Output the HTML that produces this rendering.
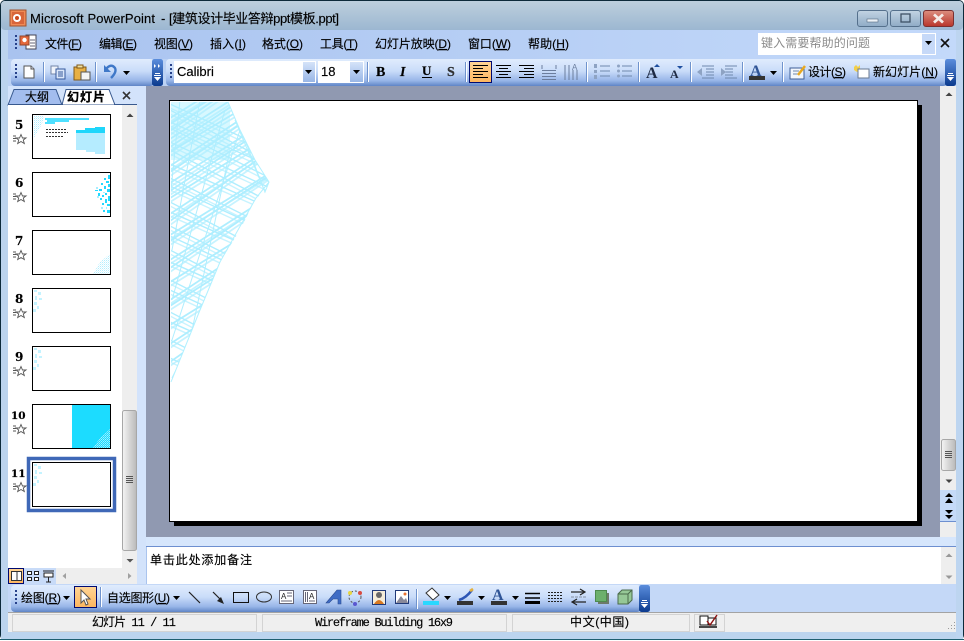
<!DOCTYPE html>
<html><head><meta charset="utf-8"><style>
html,body{margin:0;padding:0;background:#fff;width:964px;height:641px;overflow:hidden}
svg{display:block}
text{font-family:"Liberation Sans","WenQuanYi Zen Hei","Noto Sans CJK SC",sans-serif;font-size:12px;fill:#000;white-space:pre;stroke:#000;stroke-width:.15}
.m{font-family:"Liberation Mono","WenQuanYi Zen Hei",monospace;font-size:12px}
.n{font-family:"DejaVu Serif",serif;font-weight:bold;font-size:12px;fill:#000}
tspan.u{text-decoration:underline}
</style></head><body>
<svg width="964" height="641" viewBox="0 0 964 641" xmlns="http://www.w3.org/2000/svg">
<defs>
<linearGradient id="tit" x1="0" y1="0" x2="0" y2="1"><stop offset="0" stop-color="#bdcfdd"/><stop offset="1" stop-color="#9cb7d1"/></linearGradient>
<linearGradient id="menu" x1="0" y1="0" x2="1" y2="0"><stop offset="0" stop-color="#a9c3ef"/><stop offset="1" stop-color="#c3d9fa"/></linearGradient>
<linearGradient id="tb" x1="0" y1="0" x2="0" y2="1"><stop offset="0" stop-color="#e0ecfd"/><stop offset=".45" stop-color="#c9dcf9"/><stop offset=".8" stop-color="#98b6e8"/><stop offset="1" stop-color="#5f85c6"/></linearGradient>
<linearGradient id="chev" x1="0" y1="0" x2="0" y2="1"><stop offset="0" stop-color="#5a8ddc"/><stop offset="1" stop-color="#0b3a8e"/></linearGradient>
<linearGradient id="org" x1="0" y1="0" x2="0" y2="1"><stop offset="0" stop-color="#ffd596"/><stop offset="1" stop-color="#fdb65e"/></linearGradient>
<linearGradient id="btn" x1="0" y1="0" x2="0" y2="1"><stop offset="0" stop-color="#c3d4e3"/><stop offset="1" stop-color="#8fabc6"/></linearGradient>
<linearGradient id="cls" x1="0" y1="0" x2="0" y2="1"><stop offset="0" stop-color="#dc8f80"/><stop offset="1" stop-color="#b9352a"/></linearGradient>
<linearGradient id="th" x1="0" y1="0" x2="1" y2="0"><stop offset="0" stop-color="#f4f4f4"/><stop offset="1" stop-color="#b9b9b9"/></linearGradient>
<linearGradient id="dd" x1="0" y1="0" x2="0" y2="1"><stop offset="0" stop-color="#d5e3f9"/><stop offset="1" stop-color="#98b6e6"/></linearGradient>
<clipPath id="wf"><path d="M171 102H228L240 130L255 160L269 182L265 192L256 198L240 230L220 262L200 310L171 382Z"/></clipPath>
<pattern id="dotsl" width="2" height="2" patternUnits="userSpaceOnUse"><rect width="1" height="1" fill="#b2eeff"/><rect x="1" y="1" width="1" height="1" fill="#dff8ff"/></pattern>
<g id="sep"><rect width="1" height="20" fill="#6f93cd"/><rect x="1" width="1" height="20" fill="#fff"/></g>
<g id="grip"><rect x="0" y="0" width="2" height="2" fill="#27418a"/><rect x="0" y="4" width="2" height="2" fill="#27418a"/><rect x="0" y="8" width="2" height="2" fill="#27418a"/><rect x="0" y="12" width="2" height="2" fill="#27418a"/></g>
<path id="ar" d="M0 0H7L3.500 4Z" fill="#000"/>
<g id="star"><path d="M6 .5L7.500 4H11L8.300 6L9.300 9.500L6 7.500L2.700 9.500L3.700 6L1 4H4.500Z" transform="translate(1,0)" fill="#fff" stroke="#555" stroke-width=".9"/><path d="M-1 2H2M-1 4.500H2M-1 7H2" stroke="#555" fill="none"/></g>
<g id="cv"><rect x="2" y="0" width="5" height="1" fill="#fff"/><rect x="1" y="2" width="7" height="1" fill="#fff"/><path d="M1 4H8L4.500 8Z" fill="#fff"/></g>
<g id="wire11"><path d="M34 464h3v2h-3zM38 466h3v3h-3zM35 470h2v4h-2zM39 472h3v2h-3zM34 476h3v3h-3zM37 480h2v3h-2zM33 483h3v3h-3z" fill="#c4f3ff"/></g>
<g id="famA"><path stroke-width="1.800" d="M170 118l100-62M170 124l100-62M170 131l100-70M170 139l100-64M170 147l100-66M170 152l100-60M170 166l100-66M170 172l100-68M170 183l100-64M170 191l100-66M170 198l100-62M170 214l100-66M170 221l100-70M170 235l100-62M170 241l100-66M170 260l100-64M170 268l100-68M170 282l100-62M170 300l100-66M170 306l100-64M170 325l100-62M170 344l100-66M170 362l100-70"/></g>
<g id="famB"><path stroke-width="1.400" d="M170 104l100 46M170 110l100 52M170 122l100 44M170 128l100 50M170 142l100 46M170 150l100 52M170 164l100 44M170 178l100 50M170 186l100 46M170 202l100 52M170 212l100 44M170 226l100 50M170 236l100 46M170 250l100 52M170 262l100 44M170 280l100 50M170 290l100 46M170 312l100 52M170 322l100 44M170 340l100 50M170 358l100 46"/></g>
</defs>

<!-- window -->
<rect width="964" height="641" fill="#fff"/>
<rect x="0" y="0" width="964" height="640" rx="5" fill="#0d2a3a"/>
<rect x="1" y="1" width="962" height="638" rx="4" fill="#bcd2ea"/>
<rect x="1" y="1" width="962" height="29" rx="4" fill="url(#tit)"/>
<rect x="1" y="30" width="7" height="609" fill="#bcd4ee"/>
<rect x="956" y="30" width="7" height="609" fill="#bdd5f0"/>
<rect x="8" y="632" width="948" height="7" fill="#bcd4ee"/>
<rect x="0" y="639" width="964" height="1" fill="#1f5f70"/>

<!-- title -->
<rect x="10" y="10" width="16" height="16" fill="#f08a55" stroke="#a0522d"/>
<rect x="12" y="12" width="12" height="12" fill="#d8663a"/>
<circle cx="17" cy="18" r="4" fill="#fff"/><circle cx="17" cy="18" r="2" fill="#c84a20"/>
<text x="30" y="23" style="font-size:13px" textLength="125">Microsoft PowerPoint</text>
<text x="161" y="23" style="font-size:13px">-</text>
<text x="169" y="23" style="font-size:13px" textLength="170">[建筑设计毕业答辩ppt模板.ppt]</text>

<!-- window buttons -->
<rect x="857.500" y="10.500" width="30" height="16" rx="2.500" fill="url(#btn)" stroke="#55708c"/>
<rect x="867" y="19" width="11" height="3" fill="#eef3f8" stroke="#566a80" stroke-width=".6"/>
<rect x="890.500" y="10.500" width="30" height="16" rx="2.500" fill="url(#btn)" stroke="#55708c"/>
<rect x="901" y="14" width="9" height="8" fill="none" stroke="#3f5266" stroke-width="1.300"/>
<rect x="923.500" y="10.500" width="30" height="16" rx="2.500" fill="url(#cls)" stroke="#7a3030"/>
<path d="M934 14.500L943 22.500M943 14.500L934 22.500" stroke="#f5ece8" stroke-width="2.800"/>

<!-- menu bar -->
<rect x="8" y="30" width="948" height="29" fill="url(#menu)"/>
<use href="#grip" x="15" y="35"/>
<rect x="26" y="35" width="10" height="14" fill="#fff" stroke="#445"/>
<rect x="20" y="36" width="9" height="9" fill="#e4683c" stroke="#92452a"/>
<circle cx="24.500" cy="40" r="2.200" fill="#fff"/>
<path d="M30 40H35M30 43H35M30 46H35" stroke="#667"/>
<text x="45" y="48" textLength="37">文件(<tspan class="u">F</tspan>)</text>
<text x="99" y="48" textLength="38">编辑(<tspan class="u">E</tspan>)</text>
<text x="154" y="48" textLength="39">视图(<tspan class="u">V</tspan>)</text>
<text x="210" y="48" textLength="36">插入(<tspan class="u">I</tspan>)</text>
<text x="262" y="48" textLength="41">格式(<tspan class="u">O</tspan>)</text>
<text x="320" y="48" textLength="38">工具(<tspan class="u">T</tspan>)</text>
<text x="375" y="48" textLength="76">幻灯片放映(<tspan class="u">D</tspan>)</text>
<text x="468" y="48" textLength="43">窗口(<tspan class="u">W</tspan>)</text>
<text x="528" y="48" textLength="41">帮助(<tspan class="u">H</tspan>)</text>
<rect x="758" y="33" width="178" height="22" fill="#fff"/>
<text x="761" y="47" style="fill:#8c8c8c;stroke:none" textLength="109">键入需要帮助的问题</text>
<rect x="922" y="34" width="13" height="20" fill="#c6d9f8"/>
<use href="#ar" x="925" y="41"/>
<path d="M941 39L949 47M949 39L941 47" stroke="#111" stroke-width="1.600"/>

<!-- toolbar row -->
<rect x="8" y="59" width="948" height="27" fill="#bcd2f4"/>
<rect x="11" y="59" width="143" height="27" rx="4" fill="url(#tb)"/>
<rect x="152" y="59" width="11" height="27" rx="2.500" fill="url(#chev)"/>
<path d="M154 64L156 66L154 68ZM158 64L160 66L158 68Z" fill="#fff"/>
<use href="#cv" x="153" y="73"/>
<use href="#grip" x="15" y="64"/>
<path d="M24 66H31L34 69V78H24Z" fill="#fff" stroke="#555"/>
<path d="M31 66V69H34" fill="#dde" stroke="#555"/>
<use href="#sep" x="43" y="62"/>
<path d="M51 66H58V74H51Z" fill="#f0f4fb" stroke="#7486a8"/>
<path d="M56 69H65V79H56Z" fill="#dbe7fa" stroke="#35589c"/><path d="M58 72H63M58 74H63M58 76H63" stroke="#35589c"/>
<rect x="74" y="67" width="12" height="13" fill="#e8b044" stroke="#80591a"/>
<rect x="77" y="65" width="6" height="3" fill="#f0e0a0" stroke="#80591a"/>
<rect x="81" y="72" width="9" height="8" fill="#f4f4f4" stroke="#555"/>
<use href="#sep" x="95" y="62"/>
<path d="M106 69Q111 63 115 68Q117 72 111 78" fill="none" stroke="#3f78c8" stroke-width="2.400"/>
<path d="M104 65V72H111Z" fill="#3f78c8"/>
<use href="#ar" x="123" y="71"/>

<rect x="166" y="59" width="781" height="27" rx="4" fill="url(#tb)"/>
<rect x="945" y="59" width="11" height="27" rx="2.500" fill="url(#chev)"/>
<use href="#cv" x="946" y="73"/>
<use href="#grip" x="170" y="64"/>
<rect x="174" y="61" width="142" height="22" fill="#fff"/>
<text x="177" y="76" style="font-size:13px">Calibri</text>
<rect x="303" y="62" width="12" height="20" fill="url(#dd)"/>
<use href="#ar" x="305" y="70"/>
<rect x="318" y="61" width="46" height="22" fill="#fff"/>
<text x="321" y="76" style="font-size:13px">18</text>
<rect x="350" y="62" width="13" height="20" fill="url(#dd)"/>
<use href="#ar" x="353" y="70"/>
<use href="#sep" x="367" y="62"/>
<text x="376" y="76" style="font-family:'Liberation Serif',serif;font-weight:bold;font-size:14px">B</text>
<text x="400" y="76" style="font-family:'Liberation Serif',serif;font-weight:bold;font-style:italic;font-size:14px">I</text>
<text x="422" y="75" style="font-family:'Liberation Serif',serif;font-weight:bold;font-size:13px">U</text><rect x="422" y="77" width="10" height="1" fill="#000"/>
<text x="447" y="76" style="font-family:'Liberation Serif',serif;font-weight:bold;font-size:14px;fill:#333">S</text>
<use href="#sep" x="465" y="62"/>
<rect x="469.500" y="61.500" width="22" height="21" fill="url(#org)" stroke="#000a70"/>
<path d="M473 65.500H488M473 68.500H483M473 71.500H488M473 74.500H483M473 77.500H488" stroke="#000"/>
<path d="M496 65.500H511M499 68.500H508M496 71.500H511M499 74.500H508M496 77.500H511" stroke="#000"/>
<path d="M519 65.500H534M524 68.500H534M519 71.500H534M524 74.500H534M519 77.500H534" stroke="#000"/>
<path d="M542 70.500H556M542 73.500H556M542 76.500H556M542 79.500H556M542 65V69M556 65V69" stroke="#6b7d9d" fill="none"/>
<path d="M565 65V80M569 65V80M573 70V80M577 70V80" stroke="#6b7d9d"/>
<text x="572" y="70" style="font-size:8px;fill:#6b7d9d;stroke:none">A</text>
<use href="#sep" x="586" y="62"/>
<path d="M599 66H609M599 71H609M599 76H609" stroke="#6f88ad" transform="translate(1,0)"/><path d="M594 64h3v4h-3zM594 70h3v3h-3zM594 75h3v4h-3z" fill="#8ea3c3"/>
<path d="M622 66H632M622 71H632M622 76H632" stroke="#6f88ad"/><circle cx="618.500" cy="66" r="1.500" fill="#8ea3c3"/><circle cx="618.500" cy="71" r="1.500" fill="#8ea3c3"/><circle cx="618.500" cy="76" r="1.500" fill="#8ea3c3"/>
<use href="#sep" x="638" y="62"/>
<text x="646" y="78" style="font-family:'Liberation Serif',serif;font-weight:bold;font-size:16px;fill:#1e2a44;stroke:none">A</text>
<path d="M654 67H660L657 64Z" fill="#1f4f9f"/>
<text x="670" y="78" style="font-family:'Liberation Serif',serif;font-weight:bold;font-size:12px;fill:#1e2a44;stroke:none">A</text>
<path d="M677 66H683L680 69Z" fill="#1f4f9f"/>
<use href="#sep" x="690" y="62"/>
<path d="M702 66H714M706 69H714M706 72H714M706 75H714M702 78H714" stroke="#6f88ad"/><path d="M697 72L702 68V76Z" fill="#8ea3c3"/>
<path d="M722 66H734M722 69H730M722 72H730M722 75H730M722 78H734" stroke="#6f88ad" transform="translate(3,0)"/><path d="M726 72L721 68V76Z" fill="#8ea3c3"/>
<use href="#sep" x="742" y="62"/>
<text x="750" y="76" style="font-family:'Liberation Serif',serif;font-weight:bold;font-size:16px;fill:#2f5496;stroke:none">A</text>
<rect x="749" y="76" width="16" height="4" fill="#333"/>
<use href="#ar" x="770" y="71"/>
<use href="#sep" x="782" y="62"/>
<rect x="790" y="68" width="14" height="11" fill="#f2f6fc" stroke="#3f5f98"/>
<path d="M793 71H799M793 74H798" stroke="#6f88ad"/>
<path d="M798 75L805 66" stroke="#e8a820" stroke-width="2.500"/>
<text x="808" y="76" textLength="38">设计(<tspan class="u">S</tspan>)</text>
<path d="M854 67l2-2 2 2 2-2v5l-3 2-3-2z" fill="#f2cf4b"/>
<rect x="858" y="69" width="11" height="9" fill="#fff" stroke="#6a7a90"/>
<text x="873" y="76" textLength="65">新幻灯片(<tspan class="u">N</tspan>)</text>

<!-- tabs / left pane -->
<rect x="8" y="86" width="138" height="19" fill="#d3e3fb"/>
<path d="M8 105L14 89.500H56L62 105Z" fill="#a3bdee" stroke="#38598f"/>
<text x="25" y="101" textLength="24">大纲</text>
<path d="M62 105L66 89.500H109L115 105Z" fill="#fff" stroke="#38598f"/>
<text x="67" y="101" textLength="38" style="font-weight:bold;stroke-width:.3">幻灯片</text>
<path d="M123 92L130 99M130 92L123 99" stroke="#333" stroke-width="1.600"/>
<path d="M8 104.500H63M114 104.500H137" stroke="#38598f"/>
<rect x="8" y="105" width="114" height="463" fill="#fff"/>
<rect x="122" y="105" width="15" height="463" fill="#eeeeee"/>
<rect x="137" y="86" width="9" height="498" fill="#d3e3fb"/>
<path d="M126.500 117L130 113.500L133.500 117Z" fill="#444"/>
<rect x="122.500" y="410.500" width="14" height="140" rx="2" fill="url(#th)" stroke="#a7a7a7"/>
<path d="M126 476.500H133M126 478.500H133M126 480.500H133M126 482.500H133" stroke="#555"/>
<path d="M126.500 559H133.500L130 562.500Z" fill="#555"/>

<!-- thumbs -->
<g fill="#fff" stroke="#000">
<rect x="32.500" y="114.500" width="78" height="44"/>
<rect x="32.500" y="172.500" width="78" height="44"/>
<rect x="32.500" y="230.500" width="78" height="44"/>
<rect x="32.500" y="288.500" width="78" height="44"/>
<rect x="32.500" y="346.500" width="78" height="44"/>
<rect x="32.500" y="404.500" width="78" height="44"/>
</g>
<rect x="28.500" y="458.500" width="86" height="52" fill="none" stroke="#3f68b7" stroke-width="3.500"/>
<rect x="32.500" y="462.500" width="78" height="44" fill="#fff" stroke="#000"/>
<!-- thumb 5 -->
<path d="M34 116H44L42 124L36 134L34 138Z" fill="url(#dotsl)"/>
<path d="M45 118h44v2H45zM47 120h22v2H47zM45 122h10v2H45z" fill="#22d8ff" opacity=".8"/>
<path d="M46 129.500H66M46 132.500H68M46 136.500H64" stroke="#333" stroke-dasharray="2 1"/>
<path d="M76 130H105V154H95V152H86V150H76Z" fill="#b5ecff"/>
<path d="M76 130H85V128H95V127H105V133H76Z" fill="#1fd6fb"/>
<!-- thumb 6 -->
<path d="M108 175h2v4h-2zM104 178h2v2h-2zM106 181h3v2h-3zM101 183h2v2h-2zM108 184h2v3h-2zM95 190h3v1h-3zM99 189h3v2h-3zM104 186h2v3h-2zM107 189h3v3h-3zM98 193h2v3h-2zM102 195h2v2h-2zM105 193h2v2h-2zM108 196h2v5h-2zM100 198h2v2h-2zM105 199h2v4h-2zM102 203h2v2h-2zM107 204h3v2h-3zM103 210h2v2h-2zM107 210h3v3h-3z" fill="#22d8ff"/>
<path d="M96 187h2v2h-2zM97 196h2v2h-2zM101 207h2v2h-2zM103 192h2v1h-2zM106 207h1v2h-1z" fill="#a8eeff"/>
<!-- thumb 7 -->
<path d="M110 254V274H93L100 262Z" fill="url(#dotsl)"/>
<!-- thumb 8, 9, 11 -->
<use href="#wire11" y="-174"/>
<use href="#wire11" y="-116"/>
<use href="#wire11"/>
<!-- thumb 10 -->
<rect x="72" y="405" width="38" height="43" fill="#1cdcff"/>
<path d="M110 429V448H93L100 438Z" fill="url(#dotsl)" opacity=".7"/>

<text class="n" x="15" y="129">5</text>
<text class="n" x="15" y="187">6</text>
<text class="n" x="15" y="245">7</text>
<text class="n" x="15" y="303">8</text>
<text class="n" x="15" y="361">9</text>
<text class="n" x="11" y="419" style="font-size:10.500px">10</text>
<text class="n" x="11" y="477" style="font-size:10.500px">11</text>
<use href="#star" x="14" y="134"/><use href="#star" x="14" y="192"/><use href="#star" x="14" y="250"/>
<use href="#star" x="14" y="308"/><use href="#star" x="14" y="366"/><use href="#star" x="14" y="424"/><use href="#star" x="14" y="482"/>

<!-- view buttons -->
<rect x="8" y="568" width="48" height="16" fill="#c8dbf8"/>
<rect x="56" y="568" width="81" height="16" fill="#eeeeee"/>
<rect x="8.500" y="568.500" width="15" height="15" fill="url(#org)" stroke="#000a70"/>
<rect x="11.500" y="571.500" width="10" height="9" fill="#fff" stroke="#333"/><path d="M17 571V581" stroke="#333"/>
<path d="M27.500 571.500h4v3h-4zM34.500 571.500h4v3h-4zM27.500 577.500h4v3h-4zM34.500 577.500h4v3h-4z" fill="#fff" stroke="#222"/>
<path d="M43 571H54M44 573H53V577H44ZM48.500 577V582M46 582H51" fill="#fff" stroke="#222"/>
<path d="M66 573V579L62.500 576Z" fill="#a0a0a0"/><path d="M128 573V579L131.500 576Z" fill="#a0a0a0"/>

<!-- main -->
<rect x="146" y="86" width="794" height="451" fill="#9099b1"/>
<rect x="174" y="105" width="748" height="421" fill="#000"/>
<rect x="169.500" y="100.500" width="748" height="421" fill="#fff" stroke="#000"/>
<g clip-path="url(#wf)" fill="none" stroke="#aeeeff">
<rect x="170" y="100" width="60" height="60" fill="#d8f8ff" stroke="none"/>
<use href="#famA"/>
<use href="#famA" y="4" opacity=".7"/>
<use href="#famB"/>
<use href="#famB" y="4" opacity=".7"/>
<path stroke-width="1" d="M180 100L170 200M200 100L172 250M225 110L172 300M240 130L172 340M265 192L172 378M230 150L190 340"/>
</g>
<path d="M228 102L240 130L255 160L269 182L265 192L245 140M265 192L235 120M269 182L256 198L220 262L200 310L171 382" fill="none" stroke="#b0f0ff"/>

<!-- right scrollbar -->
<rect x="940" y="86" width="16" height="451" fill="#eeeeee"/>
<path d="M945.500 96L949 92.500L952.500 96Z" fill="#444"/>
<rect x="941.500" y="439.500" width="14" height="31" rx="2" fill="url(#th)" stroke="#a7a7a7"/>
<path d="M945 451.500H952M945 453.500H952M945 455.500H952M945 457.500H952" stroke="#555"/>
<path d="M945.500 479.500H952.500L949 483Z" fill="#444"/>
<rect x="940" y="490" width="16" height="31" fill="#c5daf8"/>
<rect x="940" y="521" width="16" height="1" fill="#6d8fd0"/>
<path d="M945 497L949 493L953 497ZM945 503L949 498L953 503Z" fill="#000"/>
<path d="M945 510H953L949 514ZM945 515H953L949 519Z" fill="#000"/>

<!-- notes -->
<rect x="146" y="537" width="810" height="10" fill="#d6e6fc"/>
<rect x="146" y="546" width="810" height="1" fill="#6d8fd0"/>
<rect x="146" y="547" width="1" height="37" fill="#aac4ee"/>
<rect x="147" y="547" width="794" height="37" fill="#fff"/>
<rect x="941" y="547" width="15" height="37" fill="#eeeeee"/>
<path d="M945.500 557L949 553.500L952.500 557Z" fill="#999"/>
<path d="M945.500 575.500H952.500L949 579Z" fill="#999"/>
<text x="150" y="564" textLength="102">单击此处添加备注</text>

<!-- drawing toolbar -->
<rect x="8" y="584" width="948" height="28" fill="#c4d8f7"/>
<rect x="11" y="585" width="630" height="27" rx="4" fill="url(#tb)"/>
<rect x="639" y="585" width="11" height="27" rx="2.500" fill="url(#chev)"/>
<use href="#cv" x="640" y="600"/>
<use href="#grip" x="15" y="590"/>
<text x="21" y="602" textLength="40">绘图(<tspan class="u">R</tspan>)</text>
<use href="#ar" x="63" y="596"/>
<rect x="74.500" y="586.500" width="22" height="21" fill="url(#org)" stroke="#000a70"/>
<path d="M81 590V603L84 600L86 605L88 604L86 599H90Z" fill="#fff" stroke="#555"/>
<use href="#sep" x="100" y="587"/>
<text x="107" y="602" textLength="63">自选图形(<tspan class="u">U</tspan>)</text>
<use href="#ar" x="173" y="596"/>
<path d="M189 592L200 603" stroke="#222" stroke-width="1.200"/>
<path d="M213 592L222 601" stroke="#222" stroke-width="1.200"/><path d="M224 604L217 601L221 597Z" fill="#222"/>
<rect x="233.500" y="592.500" width="15" height="10" fill="none" stroke="#111"/>
<ellipse cx="264" cy="597" rx="7.500" ry="5" fill="none" stroke="#333"/>
<rect x="279.500" y="590.500" width="14" height="13" fill="#fff" stroke="#667"/>
<text x="281" y="599" style="font-size:8px;fill:#222;stroke:none">A</text><path d="M287 593H292M287 596H292M281 601H292" stroke="#667"/>
<rect x="303.500" y="590.500" width="13" height="13" fill="#fff" stroke="#667"/>
<text x="309" y="599" style="font-size:8px;fill:#222;stroke:none">A</text><path d="M305.500 592V602M307.500 592V602M315 601H309" stroke="#667"/>
<path d="M326 603L337 590H341V604H338V599H333L329 603Z" fill="#3f6cc5" stroke="#2a4a90" stroke-width=".6"/>
<circle cx="355" cy="597" r="6" fill="none" stroke="#555" stroke-dasharray="2 2"/>
<circle cx="350" cy="593" r="2" fill="#e8d640"/><circle cx="360" cy="593" r="2" fill="#d84a40"/><circle cx="355" cy="604" r="2" fill="#5a58d0"/>
<rect x="372.500" y="590.500" width="13" height="14" fill="#f4ecd8" stroke="#203a78"/>
<circle cx="379" cy="595" r="3" fill="#666"/><path d="M374 604Q379 596 384 604Z" fill="#d87820"/>
<rect x="395.500" y="590.500" width="13" height="13" fill="#fff" stroke="#203a78"/>
<path d="M396 603L401 596L404 600L406 598L408 603Z" fill="#889"/><circle cx="405" cy="594" r="1.500" fill="#e87030"/>
<use href="#sep" x="416" y="589"/>
<path d="M426 593L432 588L439 595L433 600Z" fill="#fff" stroke="#333"/>
<rect x="423" y="601" width="16" height="4" fill="#2ad8ff"/>
<use href="#ar" x="444" y="596"/>
<path d="M459 600Q466 598 472 590" stroke="#2c55b5" stroke-width="2.600" fill="none"/><path d="M470 591L473 589" stroke="#e2b040" stroke-width="2.600"/>
<rect x="457" y="601" width="16" height="4" fill="#333"/>
<use href="#ar" x="478" y="596"/>
<text x="492" y="600" style="font-family:'Liberation Serif',serif;font-weight:bold;font-size:16px;fill:#2f5496;stroke:none">A</text>
<rect x="491" y="601" width="16" height="4" fill="#333"/>
<use href="#ar" x="512" y="596"/>
<path d="M525 593.500H540M525 598H540" stroke="#000" stroke-width="1.500"/><rect x="525" y="601" width="15" height="3" fill="#000"/>
<path d="M548 592.500H563M548 595.500H563M548 598.500H563M548 601.500H563" stroke="#222" stroke-dasharray="2 1"/>
<path d="M571 592H584M580 589L585 592L580 595M586 602H573M577 599L572 602L577 605" fill="none" stroke="#222" stroke-width="1.200"/>
<path d="M571 597H586" stroke="#222" stroke-dasharray="3 1" opacity=".4"/>
<rect x="598" y="593" width="11" height="11" fill="#6d7a6a"/>
<rect x="595.500" y="590.500" width="11" height="11" fill="#6cb06c" stroke="#4d8a4d"/>
<path d="M618 594L622 590H632V600L628 604H618Z" fill="#96c896" stroke="#4a6a4a"/><path d="M618 594H628V604M628 594L632 590" fill="none" stroke="#4a6a4a"/>

<!-- status bar -->
<rect x="8" y="612" width="948" height="1" fill="#a3a3a3"/>
<rect x="8" y="613" width="948" height="19" fill="#efefef"/>
<g fill="none" stroke="#d3d3d3">
<rect x="12.500" y="614.500" width="244" height="17"/>
<rect x="262.500" y="614.500" width="244" height="17"/>
<rect x="512.500" y="614.500" width="177" height="17"/>
<rect x="694.500" y="614.500" width="30" height="17"/>
</g>
<text x="92" y="626" class="m" textLength="84">幻灯片 11 / 11</text>
<text x="315" y="626" class="m" textLength="138">Wireframe Building 16x9</text>
<text x="570" y="626" textLength="59">中文(中国)</text>
<path d="M700 616H708V625H700ZM708 618H716V625H708Z" fill="#fff" stroke="#111"/><path d="M699 627H717" stroke="#111" stroke-width="1.500"/>
<path d="M707 621L710 625L717 615" fill="none" stroke="#8c1010" stroke-width="1.400"/>
<path d="M954 622h1v1h-1zM951 625h1v1h-1zM954 625h1v1h-1zM948 628h1v1h-1zM951 628h1v1h-1zM954 628h1v1h-1z" fill="#999"/>
</svg>
</body></html>
